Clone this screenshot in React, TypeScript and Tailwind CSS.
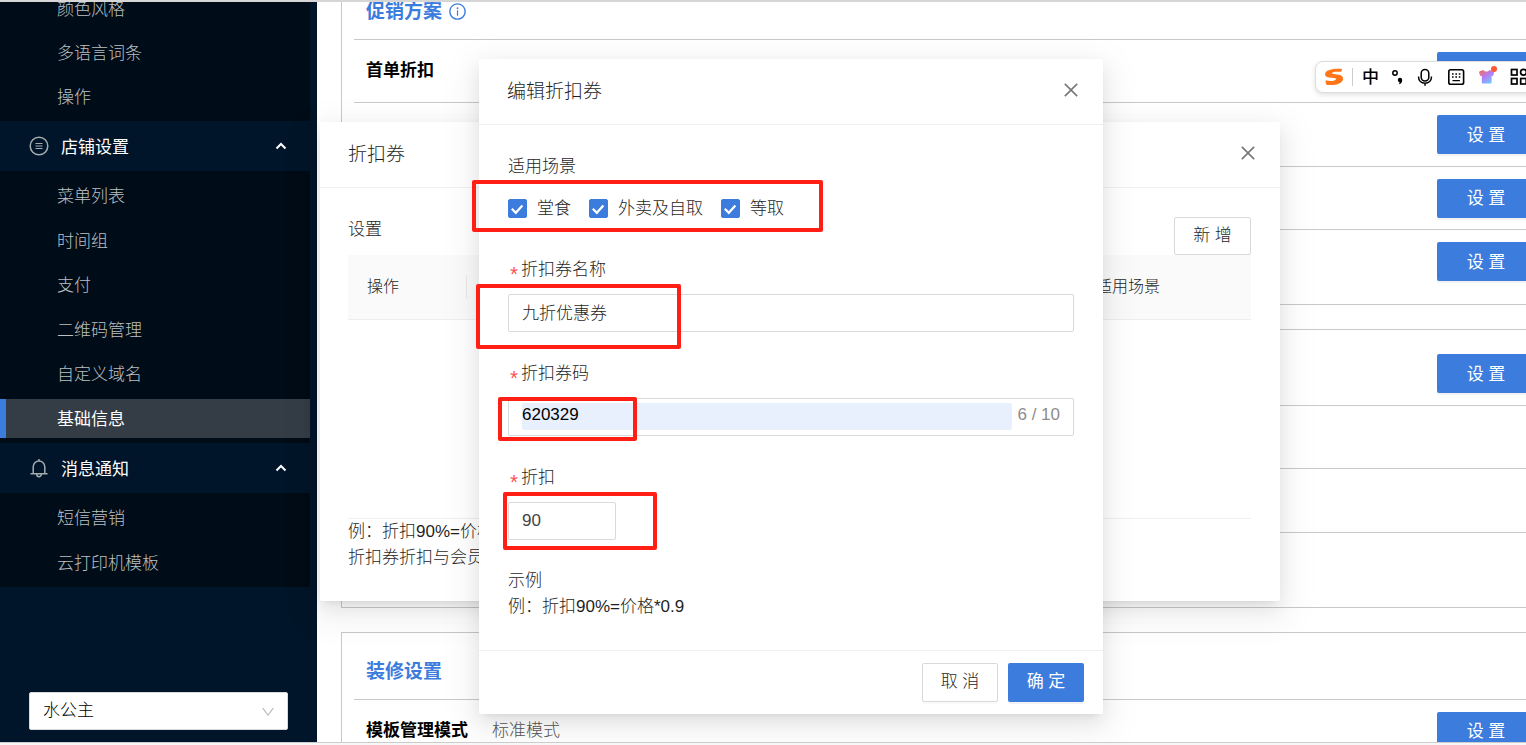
import { useState } from "react";
import {
  AiOutlineClose,
  AiOutlineDown,
  AiOutlineInfoCircle,
} from "react-icons/ai";
import { clsx } from "clsx";

const shopItems = ["菜单列表", "时间组", "支付", "二维码管理", "自定义域名", "基础信息"];
const scenes = ["堂食", "外卖及自取", "等取"];

function MenuItem({ label, active }: { label: string; active?: boolean }) {
  return (
    <a
      href="#"
      className={clsx(
        "flex h-[39px] shrink-0 items-center border-l-[6px] pt-[3px] pl-[51px]",
        active
          ? "border-[#3c7cdd] bg-[#343d46] font-normal text-white"
          : "border-transparent text-[#bcc0c4]"
      )}
    >
      {label}
    </a>
  );
}

function MenuGroup({ label, icon }: { label: string; icon: React.ReactNode }) {
  return (
    <button type="button" className="flex h-[50px] w-full shrink-0 items-center pr-[23px] pl-[29px] font-normal text-white">
      <span className="text-[#a6abb0]">{icon}</span>
      <span className="ml-3 pt-[3px]">{label}</span>
      <svg className="ml-auto h-3 w-3" viewBox="0 0 12 12" fill="none" stroke="currentColor" strokeWidth="2">
        <path d="M1.5 8.5 6 4l4.500 4.500" />
      </svg>
    </button>
  );
}

function Sidebar() {
  return (
    <aside className="flex w-[317px] shrink-0 flex-col bg-[#001529]">
      <nav className="flex flex-col pr-[7px]">
        <div className="flex h-[119px] flex-col justify-end gap-[5px] overflow-hidden bg-[#000c17] pb-[5px]">
          <MenuItem label="颜色风格" />
          <MenuItem label="多语言词条" />
          <MenuItem label="操作" />
        </div>
        <MenuGroup
          label="店铺设置"
          icon={
            <svg className="h-5 w-5" viewBox="0 0 20 20" fill="none" stroke="currentColor" strokeWidth="1.5">
              <circle cx="10" cy="10" r="8.800" />
              <path d="M6.500 7.500h7M6.500 10h7M6.500 12.500h7" strokeWidth="1.200" />
            </svg>
          }
        />
        <div className="flex h-[272px] flex-col justify-evenly bg-[#000c17]">
          {shopItems.map((item) => (
            <MenuItem key={item} label={item} active={item === "基础信息"} />
          ))}
        </div>
        <MenuGroup
          label="消息通知"
          icon={
            <svg className="h-5 w-5" viewBox="0 0 20 20" fill="none" stroke="currentColor" strokeWidth="1.500">
              <path d="M4.200 15.500V8.800a5.800 5.800 0 0 1 11.600 0v6.700M1.500 15.700h17M10 1v2M7.800 16.500a2.200 2.200 0 0 0 4.400 0" />
            </svg>
          }
        />
        <div className="flex h-[94px] flex-col justify-evenly bg-[#000c17]">
          <MenuItem label="短信营销" />
          <MenuItem label="云打印机模板" />
        </div>
      </nav>
      <div className="relative mt-auto mr-[29px] mb-3 ml-[29px]">
        <select
          aria-label="店铺"
          className="h-[38px] w-full appearance-none rounded-[2px] border border-[#d9d9d9] bg-white px-[13px] text-black"
        >
          <option>水公主</option>
        </select>
        <AiOutlineDown className="pointer-events-none absolute top-3 right-3 h-4 w-4 text-[#bfbfbf]" />
      </div>
    </aside>
  );
}

function SetButton() {
  return (
    <button
      type="button"
      className="ml-auto h-[39px] w-[98px] shrink-0 rounded-[2px] bg-[#3c7cdd] pt-0.5 font-normal text-white shadow-[0_2px_0_rgba(0,0,0,0.05)]"
    >
      设 置
    </button>
  );
}

type RowProps = {
  label?: string;
  value?: string;
  button?: boolean;
  tall?: boolean;
  last?: boolean;
};

function Row({ label, value, button, tall, last }: RowProps) {
  return (
    <div className={clsx("flex items-center px-3", tall ? "h-16" : "h-[63px]", !last && "border-b border-[#c9c9c9]")}>
      {label && <span className="font-bold text-black">{label}</span>}
      {value && <span className="ml-6 text-[#555555]">{value}</span>}
      {button && <SetButton />}
    </div>
  );
}

function Settings() {
  return (
    <main className="min-w-0 flex-1 overflow-hidden bg-white pl-6">
      <div className="-mr-[34px] flex flex-col gap-6">
        <section className="border border-t-0 border-[#c9c9c9] px-3 pb-[11px]">
          <h2 className="flex h-[38px] items-start border-b border-[#c9c9c9] px-3 text-[19px] leading-5 font-bold text-[#3c7cdd]">
            促销方案
            <AiOutlineInfoCircle className="ml-1.5 h-[19px] w-[19px]" />
          </h2>
          <Row label="首单折扣" button />
          <Row button tall />
          <Row button />
          <Row button last />
        </section>
        <section className="border border-[#c9c9c9] px-3 pt-3 pb-[11px]">
          <Row button tall />
          <Row />
          <Row tall />
          <Row last />
        </section>
        <section className="border border-[#c9c9c9] px-3">
          <h2 className="flex h-[67px] items-center border-b border-[#c9c9c9] px-3 pt-3 text-[19px] font-bold text-[#3c7cdd]">
            装修设置
          </h2>
          <Row label="模板管理模式" value="标准模式" button />
        </section>
      </div>
    </main>
  );
}

function Dialog({ title, className, children }: { title: string; className: string; children: React.ReactNode }) {
  return (
    <div
      role="dialog"
      aria-label={title}
      className={clsx(
        "relative rounded-[2px] bg-white text-[#1f1f1f] shadow-[0_4px_7px_-5px_rgba(0,0,0,0.12),0_7px_19px_rgba(0,0,0,0.08),0_11px_34px_10px_rgba(0,0,0,0.05)]",
        className
      )}
    >
      <header className="flex h-[66px] items-center justify-between border-b border-[#f0f0f0] pr-[22px] pl-7">
        <h3 className="text-[19px]">{title}</h3>
        <button type="button" aria-label="关闭" className="pb-1 text-[#777777]">
          <AiOutlineClose className="h-5 w-5" />
        </button>
      </header>
      {children}
    </div>
  );
}

function CouponList() {
  return (
    <Dialog title="折扣券" className="h-[479px] w-[960px]">
      <div className="pt-[29px] pr-[29px] pl-7">
        <div className="flex items-start justify-between">
          <span>设置</span>
          <button type="button" className="h-[38px] w-[77px] rounded-[2px] border border-[#d9d9d9] bg-white">
            新 增
          </button>
        </div>
        <div className="h-[264px] border-b border-[#f0f0f0]">
          <table className="w-full table-fixed text-left text-base">
            <thead>
              <tr className="h-16 border-b border-[#eeeeee] bg-[#fafafa]">
                <th className="w-[119px] pl-[19px] font-light">
                  <div className="border-r border-[#e8e8e8]">操作</div>
                </th>
                <th />
                <th className="w-[174px] pl-[19px] font-light">适用场景</th>
              </tr>
            </thead>
          </table>
        </div>
        <p>例：折扣90%=价格*0.9</p>
        <p>折扣券折扣与会员</p>
      </div>
    </Dialog>
  );
}

function FieldLabel({ id, children }: { id: string; children: React.ReactNode }) {
  return (
    <label htmlFor={id} className="mb-3 flex h-[26px] pt-px">
      <span className="w-[13px] pt-1.5 font-[Liberation_Mono] text-xl text-[#ff4d4f]">*</span>
      {children}
    </label>
  );
}

function SceneCheckbox({ label }: { label: string }) {
  const [checked, setChecked] = useState(true);
  return (
    <label className="flex items-center gap-2.5">
      <span className="relative flex">
        <input
          type="checkbox"
          checked={checked}
          onChange={() => setChecked(!checked)}
          className="h-[19px] w-[19px] appearance-none rounded-[2px] border border-[#d9d9d9] checked:border-[#3c7cdd] checked:bg-[#3c7cdd]"
        />
        {checked && (
          <svg className="pointer-events-none absolute inset-0" viewBox="0 0 19 19" fill="none" stroke="white" strokeWidth="2.200">
            <path d="m3.800 9.800 4 4 6.600-7.300" />
          </svg>
        )}
      </span>
      <span className="pt-0.5">{label}</span>
    </label>
  );
}

function EditCoupon() {
  return (
    <Dialog title="编辑折扣券" className="w-[624px]">
      <form className="px-[29px] pt-[29px] pb-[30px]">
        <fieldset>
          <legend className="mb-[9px]">适用场景</legend>
          <div className="mb-[29px] flex h-[38px] items-center gap-[18px]">
            {scenes.map((scene) => (
              <SceneCheckbox key={scene} label={scene} />
            ))}
          </div>
        </fieldset>

        <FieldLabel id="name">折扣券名称</FieldLabel>
        <input
          id="name"
          defaultValue="九折优惠券"
          className="mb-7 block h-[38px] w-full rounded-[2px] border border-[#d9d9d9] px-[13px] pb-1"
        />

        <FieldLabel id="code">折扣券码</FieldLabel>
        <div className="mb-7 flex h-[38px] items-center rounded-[2px] border border-[#d9d9d9] px-[13px] pb-0.5">
          <input
            id="code"
            defaultValue="620329"
            maxLength={10}
            className="h-[27px] min-w-0 flex-1 rounded-[2px] bg-[#e8f0fe] pb-0.5 text-black"
          />
          <span className="ml-[5px] pb-0.5 text-[#8c8c8c]">6 / 10</span>
        </div>

        <FieldLabel id="discount">折扣</FieldLabel>
        <input
          id="discount"
          defaultValue="90"
          className="mb-7 block h-[38px] w-[108px] rounded-[2px] border border-[#d9d9d9] px-[13px] text-[#444444]"
        />

        <p>示例</p>
        <p>例：折扣90%=价格*0.9</p>
      </form>
      <footer className="flex justify-end gap-2.5 border-t border-[#f0f0f0] py-3 pr-[19px]">
        <button
          type="button"
          className="h-[39px] w-[76px] rounded-[2px] border border-[#d9d9d9] bg-white pb-0.5 shadow-[0_2px_0_rgba(0,0,0,0.02)]"
        >
          取 消
        </button>
        <button
          type="button"
          className="h-[39px] w-[76px] rounded-[2px] bg-[#3c7cdd] pb-0.5 font-normal text-white shadow-[0_2px_0_rgba(0,0,0,0.05)]"
        >
          确 定
        </button>
      </footer>

      {/* Highlight frames drawn over the fields */}
      <div className="pointer-events-none absolute top-[121px] -left-[7px] h-[52px] w-[351px] rounded-[2px] border-4 border-[#ff1f14]" />
      <div className="pointer-events-none absolute top-[225px] -left-[3px] h-[65px] w-[205px] rounded-[2px] border-4 border-[#ff1f14]" />
      <div className="pointer-events-none absolute top-[338px] left-[19px] h-[44px] w-[139px] rounded-[2px] border-4 border-[#ff1f14]" />
      <div className="pointer-events-none absolute top-[433px] left-[24px] h-[58px] w-[154px] rounded-[2px] border-4 border-[#ff1f14]" />
    </Dialog>
  );
}

function InputMethodBar() {
  return (
    <div className="absolute top-[61px] -right-5 flex h-8 w-[231px] items-center rounded-lg border border-[#dddddd] bg-white pl-2 text-black shadow-[0_2px_5px_rgba(0,0,0,0.12)]">
      <svg className="h-[18px] w-5 shrink-0" viewBox="0 0 20 18">
        <path
          d="M17.500 1C10 .2 2.500 1.600 1.200 5.400.2 8.800 4 9.400 8 9.800c2.600.3 4.300.5 4 1.400-.5 1.700-5.200 2.300-9.400 1.400-.9-.2-1.200.1-1.100.8l.6 2.700c.1.500.4.700.9.800 7 .9 15-1 16-5.500.8-3.800-3.200-4.700-7.400-5.100-2.300-.3-4-.4-3.700-1.300.5-1.300 4.600-1.600 8-1.200.8.1 1.300-.1 1.600-.8l.6-1.200c.2-.5 0-.7-.600-.8z"
          fill="#ff7518"
        />
      </svg>
      <span className="ml-2 h-[18px] w-px bg-[#cccccc]" />
      <span className="ml-[9px] pt-0.5 text-[17px] font-medium">中</span>
      <svg className="ml-3 h-[18px] w-[14px]" viewBox="0 0 14 18" fill="none" stroke="currentColor">
        <circle cx="4" cy="5" r="2.200" strokeWidth="1.500" />
        <circle cx="9" cy="12" r="2.200" fill="currentColor" stroke="none" />
        <path d="M10.500 12.200c0 1.600-.7 2.600-2.200 3.400" strokeWidth="1.400" />
      </svg>
      <svg className="ml-3 h-[18px] w-4" viewBox="0 0 16 18" fill="none" stroke="currentColor" strokeWidth="1.500">
        <rect x="4.200" y="1.500" width="7.600" height="11.500" rx="3.800" />
        <path d="M1.500 8.500c0 4.200 2.800 6.700 6.500 6.700s6.500-2.500 6.500-6.700M8 15v2.700" />
      </svg>
      <svg className="ml-[14px] h-[18px] w-[18px]" viewBox="0 0 18 18" fill="none" stroke="currentColor">
        <rect x="1.800" y="1.800" width="14.800" height="14.400" rx="1.800" strokeWidth="1.600" />
        <path d="M5 6h1.600m1.800 0h1.600m1.800 0h1.600M5 9h1.600m1.800 0h1.600m1.800 0h1.600M5.500 12.600h7.400" strokeWidth="1.400" />
      </svg>
      <svg className="ml-[13px] h-6 w-5 self-start" viewBox="0 0 20 24">
        <defs>
          <linearGradient id="shirt" x1="0" y1="0" x2="0.7" y2="1">
            <stop offset="0" stopColor="#ff6a3d" />
            <stop offset="0.5" stopColor="#b57bf5" />
            <stop offset="1" stopColor="#6fc8ff" />
          </linearGradient>
        </defs>
        <path
          d="M1.800 9.200 5.400 8c1.500 2 4.500 2 6 0l3.800 1.200c.6.200.9.600.8 1.200l-.5 2.600c-.1.600-.5.900-1.100.9h-.8v6.600c0 .7-.4 1.100-1.100 1.100H4.900c-.7 0-1.100-.4-1.100-1.100v-6.600H3c-.6 0-1-.3-1.100-.9l-.8-2.600c-.1-.6.100-1 .7-1.200z"
          fill="url(#shirt)"
        />
        <circle cx="16" cy="7" r="3" fill="#ff5533" />
      </svg>
      <svg className="ml-3 h-[18px] w-[18px] shrink-0" viewBox="0 0 18 18" fill="none" stroke="currentColor" strokeWidth="1.700">
        <rect x="1.500" y="1.500" width="5.500" height="5.500" />
        <circle cx="13.500" cy="4.200" r="2.900" />
        <rect x="1.500" y="10.500" width="5.500" height="5.500" />
        <rect x="10.700" y="10.500" width="5.500" height="5.500" />
      </svg>
    </div>
  );
}

export default function App() {
  return (
    <div className="relative flex h-screen flex-col overflow-hidden font-['Liberation_Sans','Noto_Sans_CJK_SC',sans-serif] text-[17px] leading-[26px] font-light">
      <div className="h-0.5 shrink-0 bg-[#d6d6d6]" />
      <div className="flex min-h-0 flex-1">
        <Sidebar />
        <Settings />
      </div>
      <div className="absolute top-[122px] -right-[74px] left-0 flex justify-center">
        <CouponList />
      </div>
      <div className="absolute top-[59px] -right-14 left-0 flex justify-center">
        <EditCoupon />
      </div>
      <InputMethodBar />
      <div className="relative h-[3px] shrink-0 border-t border-[#cccccc] bg-[#f7f7f7]" />
    </div>
  );
}
